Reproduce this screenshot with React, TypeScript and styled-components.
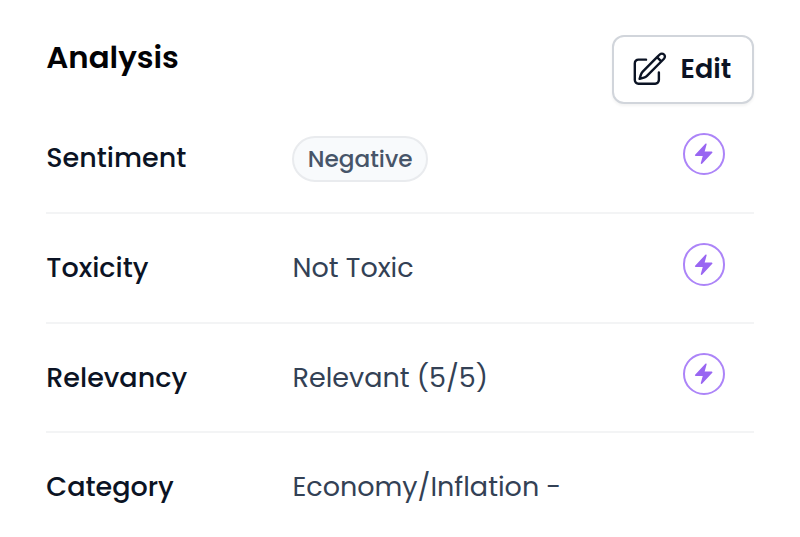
import React from "react";
import styled, { createGlobalStyle } from "styled-components";

const GlobalStyle = createGlobalStyle`
  *, *::before, *::after { box-sizing: border-box; }
  body {
    margin: 0;
    background: #fff;
    font-family: Poppins, Inter, sans-serif;
    -webkit-font-smoothing: antialiased;
  }
`;

const Panel = styled.section`
  width: 800px;
  height: 537px;
  padding: 34.5px 46px 0 46.3px;
  overflow: hidden;
  background: #fff;
`;

const Header = styled.header`
  display: flex;
  justify-content: space-between;
  align-items: flex-start;
  height: 68.5px;
`;

const Title = styled.h2`
  margin: 0;
  padding-top: 3px;
  font-size: 30.8px;
  line-height: 40px;
  font-weight: 600;
  color: #020205;
`;

const EditButton = styled.button`
  display: flex;
  align-items: center;
  gap: 12px;
  width: 142.4px;
  height: 69px;
  padding: 0 0 0 16.5px;
  border: 2px solid #d1d5db;
  border-radius: 12px;
  background: #fff;
  box-shadow: 0 2px 3px rgba(0, 0, 0, 0.05);
  color: #0b1324;
  font-family: inherit;
  font-size: 27px;
  line-height: 36px;
  font-weight: 600;
`;

const List = styled.dl`
  margin: 0;
`;

const Row = styled.div<{ $first?: boolean }>`
  display: grid;
  grid-template-columns: 246.2px 1fr 71.3px;
  align-items: center;
  height: ${(p) => (p.$first ? 111.2 : 109.6)}px;
  border-bottom: 2px solid #f3f4f5;

  &:last-child { border-bottom: 0; height: 107.4px; }
`;

const Label = styled.dt`
  font-size: 27px;
  line-height: 40px;
  font-weight: 500;
  color: #0b1324;
`;

const Value = styled.dd`
  margin: 0;
  font-size: 27px;
  line-height: 40px;
  color: #334155;
  white-space: nowrap;
`;

const Badge = styled.span`
  display: flex;
  align-items: center;
  justify-content: center;
  width: 135.5px;
  height: 46px;
  margin-top: 2px;
  border: 2px solid #e9ebee;
  border-radius: 23px;
  background: #f8fafc;
  color: #475569;
  font-size: 23.2px;
  font-weight: 500;
`;

const BoltCircle = styled.span`
  display: grid;
  place-items: center;
  width: 42.4px;
  height: 42.4px;
  margin-top: -7px;
  border: 2px solid #ac84f8;
  border-radius: 50%;
  color: #9966f2;
`;

const PencilIcon = () => (
  <svg width="38.5" height="38.5" viewBox="0 0 24 24" fill="none" stroke="currentColor" strokeWidth="1.5" strokeLinecap="round" strokeLinejoin="round">
    <path d="m16.862 4.487 1.687-1.688a1.875 1.875 0 1 1 2.652 2.652L10.582 16.07a4.5 4.5 0 0 1-1.897 1.13L6 18l.8-2.685a4.5 4.5 0 0 1 1.13-1.897l8.932-8.931Zm0 0L19.5 7.125M18 14v4.75A2.25 2.25 0 0 1 15.75 21H5.25A2.25 2.25 0 0 1 3 18.75V8.25A2.25 2.25 0 0 1 5.25 6H10" />
  </svg>
);

const BoltIcon = () => (
  <svg width="23.4" height="23.4" viewBox="0 0 24 24" fill="currentColor">
    <path d="M14.615 1.595a.75.75 0 0 1 .359.852L12.982 9.75h7.268a.75.75 0 0 1 .548 1.262l-10.5 11.25a.75.75 0 0 1-1.272-.71l1.992-7.302H3.75a.75.75 0 0 1-.548-1.262l10.5-11.25a.75.75 0 0 1 .913-.143Z" />
  </svg>
);

const rows = [
  { label: "Sentiment", value: "Negative", badge: true, bolt: true },
  { label: "Toxicity", value: "Not Toxic", badge: false, bolt: true },
  { label: "Relevancy", value: "Relevant (5/5)", badge: false, bolt: true },
  { label: "Category", value: "Economy/Inflation -", badge: false, bolt: false },
];

export default function App() {
  return (
    <>
      <GlobalStyle />
      <Panel>
        <Header>
          <Title>Analysis</Title>
          <EditButton type="button">
            <PencilIcon />
            Edit
          </EditButton>
        </Header>
        <List>
          {rows.map((row, i) => (
            <Row key={row.label} $first={i === 0}>
              <Label>{row.label}</Label>
              <Value>{row.badge ? <Badge>{row.value}</Badge> : row.value}</Value>
              {row.bolt && (
                <BoltCircle>
                  <BoltIcon />
                </BoltCircle>
              )}
            </Row>
          ))}
        </List>
      </Panel>
    </>
  );
}
